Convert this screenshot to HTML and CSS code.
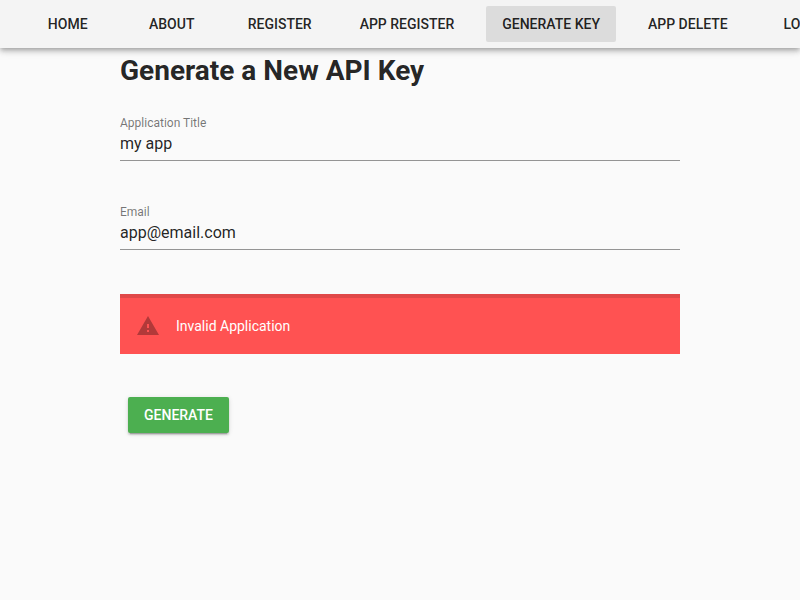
FILE: index.html
```html
<!DOCTYPE html>
<html lang="en">
<head>
<meta charset="utf-8">
<title>Generate Key</title>
<link rel="stylesheet" href="styles.css">
</head>
<body>
<nav class="toolbar">
  <a class="btn">Home</a>
  <a class="btn">About</a>
  <a class="btn">Register</a>
  <a class="btn">App Register</a>
  <a class="btn active">Generate Key</a>
  <a class="btn">App Delete</a>
  <a class="btn">Login</a>
</nav>
<main class="container">
  <h1>Generate a New API Key</h1>
  <div class="field">
    <label for="title">Application Title</label>
    <input id="title" type="text" value="my app">
  </div>
  <div class="field">
    <label for="email">Email</label>
    <input id="email" type="text" value="app@email.com">
  </div>
  <div class="alert">
    <svg class="alert-icon" viewBox="0 0 24 24"><path d="M13,14H11V10H13M13,18H11V16H13M1,21H23L12,2L1,21Z"/></svg>
    <div>Invalid Application</div>
  </div>
  <button class="generate" type="button">Generate</button>
</main>
</body>
</html>
```

FILE: styles.css
```css
* { box-sizing: border-box; }
body {
  margin: 0;
  height: 600px;
  overflow: hidden;
  background: #fafafa;
  color: rgba(0, 0, 0, 0.87);
  font-family: Roboto, sans-serif;
  font-size: 14px;
  line-height: 1.5;
}
.toolbar {
  display: flex;
  align-items: center;
  gap: 16px;
  height: 48px;
  padding-left: 23.7px;
  background: #f4f4f4;
  box-shadow: 0 2px 4px -1px rgba(0,0,0,.2), 0 4px 5px 0 rgba(0,0,0,.14), 0 1px 10px 0 rgba(0,0,0,.12);
}
.btn {
  display: flex;
  flex: none;
  align-items: center;
  justify-content: center;
  min-width: 88px;
  height: 36px;
  padding: 0 16px;
  border-radius: 2px;
  font-weight: 500;
  text-transform: uppercase;
  white-space: nowrap;
}
.active { background: #dcdcdc; }
.container {
  width: 560px;
  margin: 0 auto;
}
h1 {
  margin: 0;
  padding-top: 2px;
  font-size: 28px;
  font-weight: 700;
  line-height: 42px;
}
.field {
  height: 70px;
  margin-bottom: 19px;
  padding-top: 22px;
}
.field label {
  display: block;
  height: 18px;
  color: rgba(0, 0, 0, 0.54);
  font-size: 12px;
  line-height: 18px;
}
.field input {
  display: block;
  width: 100%;
  height: 29px;
  padding: 0 0 6px;
  border: 0;
  border-bottom: 1px solid #949494;
  outline: 0;
  background: none;
  color: rgba(0, 0, 0, 0.87);
  font: 16px Roboto, sans-serif;
}
.alert {
  display: flex;
  align-items: center;
  gap: 16px;
  height: 60px;
  margin: 43px 0;
  padding: 0 16px;
  border-top: 4px solid rgba(0, 0, 0, 0.12);
  background: #ff5252;
  color: #fff;
}
.alert-icon {
  width: 24px;
  height: 24px;
  fill: rgba(0, 0, 0, 0.3);
}
.generate {
  display: block;
  height: 36px;
  margin: 0 8px;
  padding: 0 16px;
  border: 0;
  border-radius: 2px;
  background: #4caf50;
  box-shadow: 0 3px 1px -2px rgba(0,0,0,.2), 0 2px 2px 0 rgba(0,0,0,.14), 0 1px 5px 0 rgba(0,0,0,.12);
  color: #fff;
  font: 500 14px Roboto, sans-serif;
  text-transform: uppercase;
}
```
